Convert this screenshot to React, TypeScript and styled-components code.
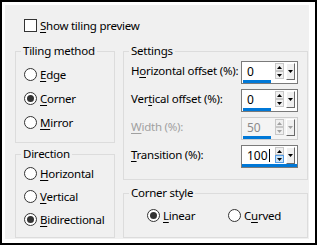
import React from "react";
import styled, { createGlobalStyle } from "styled-components";

const GlobalStyle = createGlobalStyle`
  html, body { margin: 0; padding: 0; background: #fff; }
  body {
    font-family: "Noto Sans", "Segoe UI", sans-serif;
    font-size: 11.5px;
    letter-spacing: -0.25px;
    color: #000;
  }
  * { box-sizing: border-box; }
`;

const Frame = styled.div`
  width: 317px;
  height: 245px;
  border: 2px solid #000;
  background: #fff;
  padding: 3px 6px 4px 3px;
  display: flex;
`;

const Panel = styled.div`
  flex: 1;
  background: #f0f0f0;
  padding: 14px 1px 1px 10px;
  display: flex;
  flex-direction: column;
`;

const Header = styled.div`
  display: flex;
  align-items: center;
  gap: 3px;
  height: 13px;
  margin-left: 9px;
  line-height: 15px;
`;

const Check = styled.span`
  width: 13px;
  height: 13px;
  border: 1px solid #333;
  background: #fff;
  flex: none;
`;

const Main = styled.div`
  margin-top: 12px;
  display: grid;
  grid-template-columns: 100px 185px;
  column-gap: 8px;
`;

const Column = styled.div<{ $gap: number }>`
  display: flex;
  flex-direction: column;
  gap: ${(p) => p.$gap}px;
`;

const Group = styled.fieldset`
  margin: 0;
  padding: 0;
  min-width: 0;
  border: 1px solid #dcdcdc;
`;

const Legend = styled.legend`
  margin-left: 5px;
  padding: 0 2px;
  line-height: 14px;
  font-size: 11.5px;
`;

const Body = styled.div<{ $pad: string }>`
  padding: ${(p) => p.$pad};
`;

const RadioRow = styled.div<{ $h: number }>`
  display: flex;
  align-items: center;
  gap: 3px;
  height: ${(p) => p.$h}px;
  line-height: 15px;
  white-space: nowrap;
`;

const Circle = styled.span`
  width: 13px;
  height: 13px;
  border-radius: 50%;
  border: 1px solid #333;
  background: #fff;
  display: flex;
  align-items: center;
  justify-content: center;
  flex: none;
`;

const Dot = styled.span`
  width: 7px;
  height: 7px;
  border-radius: 50%;
  background: #333;
`;

const Mn = styled.span`
  text-decoration: underline;
  text-underline-offset: 2px;
`;

const Rows = styled.div`
  display: flex;
  flex-direction: column;
  gap: 5px;
`;

const SettingRow = styled.div`
  display: grid;
  grid-template-columns: minmax(0, 1fr) 57px;
  height: 23px;
`;

const Label = styled.span<{ $disabled?: boolean }>`
  align-self: start;
  padding-top: 2px;
  line-height: 15px;
  white-space: nowrap;
  color: ${(p) => (p.$disabled ? "#a0a0a0" : "#000")};
`;

const SpinBox = styled.div<{ $disabled?: boolean; $focused?: boolean }>`
  height: 23px;
  border: 1px solid ${(p) => (p.$disabled ? "#cccccc" : "#7a7a7a")};
  background: ${(p) => (p.$disabled ? "#f4f4f4" : "#fff")};
  display: flex;
  align-items: flex-start;
  box-shadow: ${(p) => (p.$focused ? "inset 0 -3px 0 #0078d7" : "none")};
`;

const Field = styled.div<{ $underline: boolean; $disabled?: boolean }>`
  width: 28px;
  height: 21px;
  margin-left: 1px;
  padding-left: 4px;
  display: flex;
  align-items: center;
  line-height: 15px;
  font-size: 12px;
  letter-spacing: 0;
  border-bottom: 3px solid ${(p) => (p.$underline ? "#0078d7" : "transparent")};
  color: ${(p) => (p.$disabled ? "#8a8a8a" : "#000")};
`;

const Caret = styled.span`
  width: 1px;
  height: 13px;
  background: #000;
  margin-left: 1px;
`;

const UpDown = styled.div`
  margin-left: 4px;
  margin-top: 1px;
  width: 9px;
  display: flex;
  flex-direction: column;
`;

const SpinHalf = styled.div<{ $hot?: boolean }>`
  height: 8px;
  border: 1px solid ${(p) => (p.$hot ? "#569de5" : "#c8c8c8")};
  background: ${(p) => (p.$hot ? "#cce4f7" : "#f0f0f0")};
  display: flex;
  align-items: center;
  justify-content: center;
`;

const DropBtn = styled.div`
  margin-left: 2px;
  margin-top: 1px;
  width: 9px;
  height: 17px;
  background: #f0f0f0;
  border-top: 1px solid #fff;
  border-left: 1px solid #fff;
  border-right: 1px solid #696969;
  border-bottom: 1px solid #696969;
  display: flex;
  align-items: center;
  justify-content: center;
`;

const CornerRow = styled.div`
  display: grid;
  grid-template-columns: 81px auto;
`;

const Arrow = ({ up, color }: { up?: boolean; color: string }) => (
  <svg width="5" height="3" viewBox="0 0 5 3">
    <polygon points={up ? "2.5,0 5,3 0,3" : "0,0 5,0 2.5,3"} fill={color} />
  </svg>
);

type SpinProps = {
  value: string;
  disabled?: boolean;
  focused?: boolean;
};

const Spin = ({ value, disabled, focused }: SpinProps) => {
  const c = disabled ? "#a0a0a0" : "#000";
  return (
    <SpinBox $disabled={disabled} $focused={focused}>
      <Field $underline={!focused} $disabled={disabled}>
        {value}
        {focused && <Caret />}
      </Field>
      <UpDown>
        <SpinHalf>
          <Arrow up color={c} />
        </SpinHalf>
        <SpinHalf $hot={focused}>
          <Arrow color={c} />
        </SpinHalf>
      </UpDown>
      <DropBtn>
        <Arrow color={c} />
      </DropBtn>
    </SpinBox>
  );
};

const Radio = ({
  checked,
  children,
  h,
}: {
  checked?: boolean;
  children: React.ReactNode;
  h: number;
}) => (
  <RadioRow $h={h}>
    <Circle>{checked && <Dot />}</Circle>
    <span>{children}</span>
  </RadioRow>
);

export default function App() {
  return (
    <>
      <GlobalStyle />
      <Frame>
        <Panel>
          <Header>
            <Check />
            <span>
              <Mn>S</Mn>how tiling preview
            </span>
          </Header>
          <Main>
            <Column $gap={4}>
              <Group>
                <Legend>Tiling method</Legend>
                <Body $pad="4px 0 8px 8px">
                  <Radio h={24}>
                    <Mn>E</Mn>dge
                  </Radio>
                  <Radio h={24} checked>
                    <Mn>C</Mn>orner
                  </Radio>
                  <Radio h={24}>
                    <Mn>M</Mn>irror
                  </Radio>
                </Body>
              </Group>
              <Group>
                <Legend>Direction</Legend>
                <Body $pad="1px 0 6px 8px">
                  <Radio h={23}>
                    <Mn>H</Mn>orizontal
                  </Radio>
                  <Radio h={23}>
                    <Mn>V</Mn>ertical
                  </Radio>
                  <Radio h={23} checked>
                    <Mn>B</Mn>idirectional
                  </Radio>
                </Body>
              </Group>
            </Column>
            <Column $gap={6}>
              <Group>
                <Legend>Settings</Legend>
                <Body $pad="3px 9px 11px 7px">
                  <Rows>
                    <SettingRow>
                      <Label>
                        H<Mn>o</Mn>rizontal offset (%):
                      </Label>
                      <Spin value="0" />
                    </SettingRow>
                    <SettingRow>
                      <Label>
                        Ver<Mn>t</Mn>ical offset (%):
                      </Label>
                      <Spin value="0" />
                    </SettingRow>
                    <SettingRow>
                      <Label $disabled>
                        <Mn>W</Mn>idth (%):
                      </Label>
                      <Spin value="50" disabled />
                    </SettingRow>
                    <SettingRow>
                      <Label>
                        <Mn>T</Mn>ransition (%):
                      </Label>
                      <Spin value="100" focused />
                    </SettingRow>
                  </Rows>
                </Body>
              </Group>
              <Group>
                <Legend>Corner style</Legend>
                <Body $pad="3px 0 10px 23px">
                  <CornerRow>
                    <Radio h={24} checked>
                      <Mn>L</Mn>inear
                    </Radio>
                    <Radio h={24}>
                      C<Mn>u</Mn>rved
                    </Radio>
                  </CornerRow>
                </Body>
              </Group>
            </Column>
          </Main>
        </Panel>
      </Frame>
    </>
  );
}
